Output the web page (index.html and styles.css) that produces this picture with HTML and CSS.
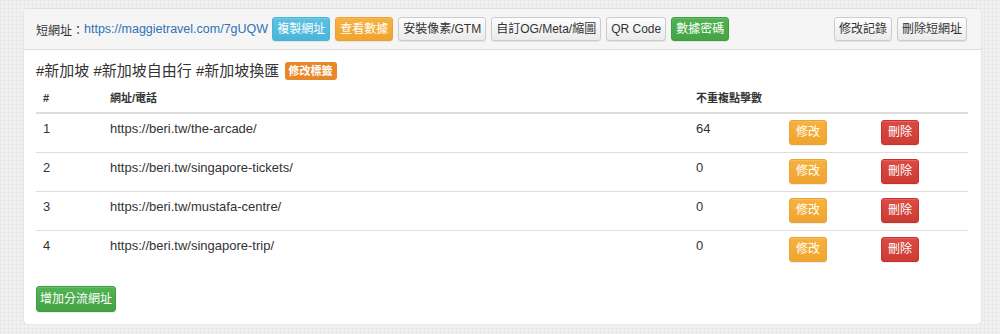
FILE: index.html
```html
<!DOCTYPE html>
<html lang="zh-Hant">
<head>
    <meta charset="UTF-8">
    <meta name="viewport" content="width=device-width, initial-scale=1.0">
    <title>短網址分流</title>
    <link rel="stylesheet" href="styles.css">
</head>
<body>
    <div class="panel">
        <div class="panel-heading">
            <span class="label-text">短網址：</span>
            <a class="short-link" href="#">https://maggietravel.com/7gUQW</a>
            <div class="btn-group">
                <button class="btn btn-info">複製網址</button>
                <button class="btn btn-warning">查看數據</button>
                <button class="btn btn-default">安裝像素/GTM</button>
                <button class="btn btn-default">自訂OG/Meta/縮圖</button>
                <button class="btn btn-default">QR Code</button>
                <button class="btn btn-success">數據密碼</button>
            </div>
            <div class="btn-group right">
                <button class="btn btn-default">修改記錄</button>
                <button class="btn btn-default">刪除短網址</button>
            </div>
        </div>

        <div class="panel-body">
            <div class="tags">
                #新加坡 #新加坡自由行 #新加坡換匯 <span class="tag-edit">修改標籤</span>
            </div>

            <table class="table">
                <colgroup>
                    <col style="width: 67px">
                    <col style="width: 586px">
                    <col style="width: 93px">
                    <col style="width: 92px">
                    <col style="width: 94px">
                </colgroup>
                <thead>
                    <tr>
                        <th>#</th>
                        <th>網址/電話</th>
                        <th>不重複點擊數</th>
                        <th></th>
                        <th></th>
                    </tr>
                </thead>
                <tbody>
                    <tr>
                        <td>1</td>
                        <td>https://beri.tw/the-arcade/</td>
                        <td>64</td>
                        <td><button class="btn btn-row btn-warning">修改</button></td>
                        <td><button class="btn btn-row btn-danger">刪除</button></td>
                    </tr>
                    <tr>
                        <td>2</td>
                        <td>https://beri.tw/singapore-tickets/</td>
                        <td>0</td>
                        <td><button class="btn btn-row btn-warning">修改</button></td>
                        <td><button class="btn btn-row btn-danger">刪除</button></td>
                    </tr>
                    <tr>
                        <td>3</td>
                        <td>https://beri.tw/mustafa-centre/</td>
                        <td>0</td>
                        <td><button class="btn btn-row btn-warning">修改</button></td>
                        <td><button class="btn btn-row btn-danger">刪除</button></td>
                    </tr>
                    <tr>
                        <td>4</td>
                        <td>https://beri.tw/singapore-trip/</td>
                        <td>0</td>
                        <td><button class="btn btn-row btn-warning">修改</button></td>
                        <td><button class="btn btn-row btn-danger">刪除</button></td>
                    </tr>
                </tbody>
            </table>

            <button class="btn btn-add btn-success">增加分流網址</button>
        </div>
    </div>
</body>
</html>
```

FILE: styles.css
```css
body {
    margin: 0;
    padding: 9px 0 0 24px;
    font-family: "Liberation Sans", "Noto Sans CJK TC", sans-serif;
    font-size: 13px;
    color: #333;
    background-color: #f1f1f1;
    background-image:
        linear-gradient(rgba(0, 0, 0, 0.025) 1px, transparent 1px),
        linear-gradient(90deg, rgba(0, 0, 0, 0.025) 1px, transparent 1px);
    background-size: 4px 4px;
}
.panel {
    width: 957px;
    background: #fff;
    border-radius: 4px;
    box-shadow: 0 0 2px rgba(0, 0, 0, 0.15);
}
.panel-heading {
    display: flex;
    align-items: center;
    height: 40px;
    padding: 0 14px 0 12px;
    background: #f5f5f5;
    border-bottom: 1px solid #ddd;
    border-radius: 4px 4px 0 0;
}
.label-text {
    font-size: 12px;
}
.short-link {
    color: #2f72b5;
    text-decoration: none;
    font-size: 12.5px;
}
.btn-group {
    display: flex;
    gap: 5px;
    margin-left: 4px;
}
.btn-group.right {
    margin-left: auto;
}
.btn {
    height: 24px;
    padding: 0 4px;
    font-family: inherit;
    font-size: 12px;
    line-height: 22px;
    border: 1px solid transparent;
    border-radius: 3px;
    cursor: pointer;
    box-shadow: inset 0 1px 0 rgba(255, 255, 255, 0.15), 0 1px 1px rgba(0, 0, 0, 0.075);
}
.btn-default {
    color: #333;
    background: linear-gradient(#fdfdfd, #ebebeb);
    border-color: #ccc;
}
.btn-info {
    color: #fff;
    background: linear-gradient(#5ec2e0, #4ab5d9);
    border-color: #46b3d8;
}
.btn-warning {
    color: #fff;
    background: linear-gradient(#f6b23e, #efa52f);
    border-color: #eba135;
}
.btn-success {
    color: #fff;
    background: linear-gradient(#52b352, #44a444);
    border-color: #3f9c3f;
}
.btn-danger {
    color: #fff;
    background: linear-gradient(#dc4a44, #cd3b35);
    border-color: #c9302c;
}
.panel-body {
    padding: 10px 13px 12px 12px;
}
.tags {
    font-size: 15px;
    line-height: 22px;
}
.tag-edit {
    display: inline-block;
    vertical-align: 1px;
    margin-left: 1px;
    padding: 0 4px;
    height: 18px;
    line-height: 18px;
    font-size: 11px;
    font-weight: bold;
    color: #fff;
    background: #e8862a;
    border-radius: 3px;
}
.table {
    width: 932px;
    margin-top: 2px;
    border-collapse: collapse;
    table-layout: fixed;
}
.table th {
    text-align: left;
    font-size: 11px;
    font-weight: bold;
    padding: 5px 8px 5px 7px;
    line-height: 18px;
    border-bottom: 2px solid #ddd;
}
.table td {
    padding: 6px 8px 7px 7px;
    line-height: 18px;
    vertical-align: top;
}
.table tbody tr + tr td {
    border-top: 1px solid #ddd;
}
.btn-row {
    height: 25px;
    padding: 0 6px;
    line-height: 23px;
}
.btn-add {
    margin-top: 17px;
    height: 26px;
    line-height: 24px;
    padding: 0 3px;
}
```
